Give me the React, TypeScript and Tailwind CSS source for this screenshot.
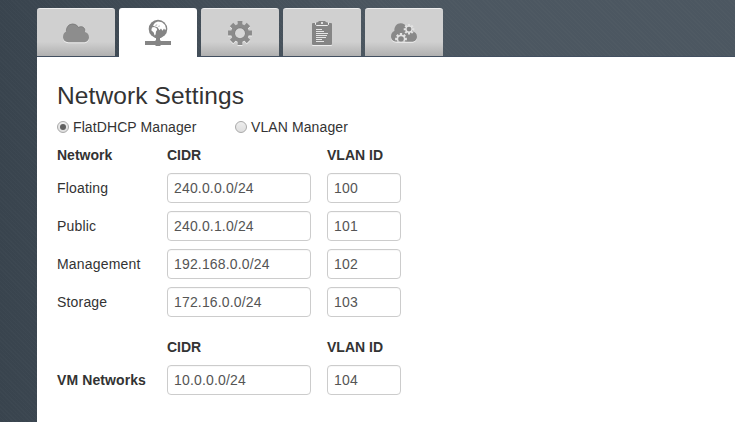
import type { ReactNode } from 'react';

const gearPoints = (cx: number, cy: number, outer: number, inner: number) => {
  const points: string[] = [];
  for (let i = 0; i < 8; i++) {
    const steps: [number, number][] = [
      [-0.27, inner],
      [-0.2, outer],
      [0.2, outer],
      [0.27, inner],
    ];
    for (const [offset, r] of steps) {
      const a = (i * Math.PI) / 4 + offset;
      points.push(`${(cx + r * Math.cos(a)).toFixed(2)},${(cy + r * Math.sin(a)).toFixed(2)}`);
    }
  }
  return points.join(' ');
};

const cloudPath =
  'M31.5 34.2C28.2 34.2 26 31.9 26 29C26 26.4 27.4 24.4 29.3 23.6C29 19.2 31.7 15.8 35.7 15.8C38.3 15.8 40.4 17.2 41.5 19.2C44 17.4 48 18.8 48 22.5V24C50.3 24.6 52 26.5 52 29.2C52 32 50 34.2 47 34.2Z';

function Icon({ children }: { children: ReactNode }) {
  return (
    <svg width="30" height="30" viewBox="24 10 30 30" className="mt-[2px]" aria-hidden="true">
      {children}
    </svg>
  );
}

function CloudIcon() {
  return (
    <Icon>
      <path d={cloudPath} fill="#eeeeee" transform="translate(0 1)" />
      <path d={cloudPath} fill="#8d8d8d" />
      <path d="M29.4 23.5C29.1 19.2 31.7 16.1 35.7 16.1C38.3 16.1 40.4 17.5 41.5 19.5C44 17.7 47.7 18.9 47.9 22.5" fill="none" stroke="#777777" strokeWidth=".7" />
    </Icon>
  );
}

function GlobeIcon() {
  return (
    <Icon>
      <path d="M26 33h10l1-1v-3h4v3l1 1h10v4H42l-1 1h-4l-1-1H26Z" fill="#858585" />
      <circle cx="39" cy="21" r="9.3" fill="#858585" />
      <path d="M33 19.5L35 19L37.5 20L38.2 21.8L37 23.5L36.6 26.5L35.6 27.6L34.7 24.5L32.3 22.3Z" fill="white" />
      <path d="M34 17.5L36 14.7L39 13.4L43 14.2L46 17L47 20.5L46.2 22.3L45 20.5L43.5 22.8L42 20.6L40.5 22.2L38.5 19.3L35.2 18.3Z" fill="white" />
      <path d="M36.4 17.4l1.8-.6M39.3 18.4l1.5-.4" stroke="#999999" strokeWidth=".8" />
    </Icon>
  );
}

function GearIcon() {
  return (
    <Icon>
      <polygon points={gearPoints(39, 26, 12.2, 9)} fill="#eeeeee" />
      <polygon points={gearPoints(39, 25, 12.2, 9)} fill="#8b8b8b" />
      <circle cx="39" cy="25" r="5.4" fill="#777777" />
      <circle cx="39" cy="25.2" r="5" fill="#d7d7d7" />
    </Icon>
  );
}

function ClipboardIcon() {
  return (
    <Icon>
      <rect x="29" y="16" width="20" height="22" rx="1" fill="#eeeeee" />
      <rect x="29" y="15" width="20" height="22" rx="1" fill="#858585" />
      <path d="M32 18v-3l3-1l1-1h6l1 1l3 1v3Z" fill="#858585" />
      <path d="M32.5 14.5V16.5L33.5 17.5H44.5L45.5 16.5V14.5" fill="none" stroke="#eeeeee" />
      <path d="M38 15h2" stroke="#dddddd" strokeWidth="2" />
      <path d="M33 21.5h6M33 23.5h8M33 25.5h12M33 27.5h11M33 29.5h10M33 31.5h6M33 33.5h8" stroke="#e5e5e5" strokeWidth="1" />
    </Icon>
  );
}

function CloudGearsIcon() {
  return (
    <Icon>
      <defs>
        <clipPath id="cloud-base">
          <rect x="24" y="10" width="30" height="23.8" />
        </clipPath>
      </defs>
      <path d={cloudPath} fill="#eeeeee" transform="translate(0 .6)" />
      <path d={cloudPath} fill="#898989" transform="translate(0 -.5)" />
      <polygon points={gearPoints(44, 21.3, 5.4, 3.8)} fill="#e2e2e2" />
      <circle cx="44" cy="21.1" r="2.4" fill="#858585" />
      <g clipPath="url(#cloud-base)">
        <polygon points={gearPoints(36, 31, 6, 4.3)} fill="#e2e2e2" />
        <circle cx="36" cy="31" r="2.8" fill="#858585" />
      </g>
    </Icon>
  );
}

const tabs = [
  { name: 'Cloud', icon: <CloudIcon /> },
  { name: 'Network', icon: <GlobeIcon />, active: true },
  { name: 'Settings', icon: <GearIcon /> },
  { name: 'Logs', icon: <ClipboardIcon /> },
  { name: 'Actions', icon: <CloudGearsIcon /> },
];

const networks = [
  ['Floating', '240.0.0.0/24', '100'],
  ['Public', '240.0.1.0/24', '101'],
  ['Management', '192.168.0.0/24', '102'],
  ['Storage', '172.16.0.0/24', '103'],
];

const inputClass =
  'h-[30px] w-full rounded border border-[#cccccc] bg-white px-1.5 text-sm tracking-[0.16px] text-[#555555] shadow-[inset_0_1px_1px_rgba(0,0,0,0.03)] outline-none';

function NetworkRow({ label, cidr, vlan, bold }: { label: string; cidr: string; vlan: string; bold?: boolean }) {
  return (
    <div className="grid grid-cols-[94px_144px_74px] items-center gap-x-4">
      <span className={bold ? 'whitespace-nowrap font-bold tracking-[0.1px]' : 'tracking-[0.18px]'}>{label}</span>
      <input className={inputClass} defaultValue={cidr} aria-label={`${label} CIDR`} />
      <input className={inputClass} defaultValue={vlan} aria-label={`${label} VLAN ID`} />
    </div>
  );
}

function HeaderRow({ label }: { label: string }) {
  return (
    <div className="grid grid-cols-[94px_144px_74px] gap-x-4 font-bold">
      <span>{label}</span>
      <span>CIDR</span>
      <span>VLAN ID</span>
    </div>
  );
}

function Radio({ label, checked }: { label: string; checked?: boolean }) {
  return (
    <label className="flex items-center gap-1 tracking-[0.1px]">
      <span className="flex size-3 items-center justify-center rounded-full border border-[#a9a9a9] bg-linear-to-b from-[#eeeeee] to-[#dedede]">
        {checked && <span className="size-1.5 rounded-full bg-[#606060]" />}
      </span>
      {label}
    </label>
  );
}

export default function App() {
  return (
    <div className="flex h-[422px] w-[735px] flex-col overflow-hidden bg-[repeating-linear-gradient(45deg,rgba(255,255,255,0.014)_0px,rgba(255,255,255,0.014)_1px,transparent_1px,transparent_3px),linear-gradient(90deg,#39444e_0px,#3b4650_40px,#4c5761_400px,#4c5761_735px)] pl-[37px] font-['Liberation_Sans',Arial,sans-serif] text-sm leading-5 text-[#333333]">
      <nav className="flex h-[57px] items-start gap-1 border-b border-[#424f60] pt-2">
        {tabs.map((tab) => (
          <button
            key={tab.name}
            aria-label={tab.name}
            className={
              tab.active
                ? 'flex h-[49px] w-[78px] justify-center rounded-t-[3px] bg-white pt-2'
                : 'flex h-12 w-[78px] justify-center rounded-t-[3px] border-t border-[#eeeeee] bg-linear-to-b from-[#d0d0d0] from-70% to-[#b0b0b0] pt-[7px]'
            }
          >
            {tab.icon}
          </button>
        ))}
      </nav>
      <main className="flex-1 bg-white px-5 pt-[19px]">
        <h3 className="text-[24.5px] leading-10 tracking-[0.12px]">Network Settings</h3>
        <div className="mt-px grid grid-cols-[178px_auto] justify-start">
          <Radio label="FlatDHCP Manager" checked />
          <Radio label="VLAN Manager" />
        </div>
        <div className="mt-2">
          <HeaderRow label="Network" />
        </div>
        <div className="mt-2 flex flex-col gap-2">
          {networks.map(([label, cidr, vlan]) => (
            <NetworkRow key={label} label={label} cidr={cidr} vlan={vlan} />
          ))}
        </div>
        <div className="mt-5 flex flex-col gap-2">
          <HeaderRow label="" />
          <NetworkRow label="VM Networks" cidr="10.0.0.0/24" vlan="104" bold />
        </div>
      </main>
    </div>
  );
}
